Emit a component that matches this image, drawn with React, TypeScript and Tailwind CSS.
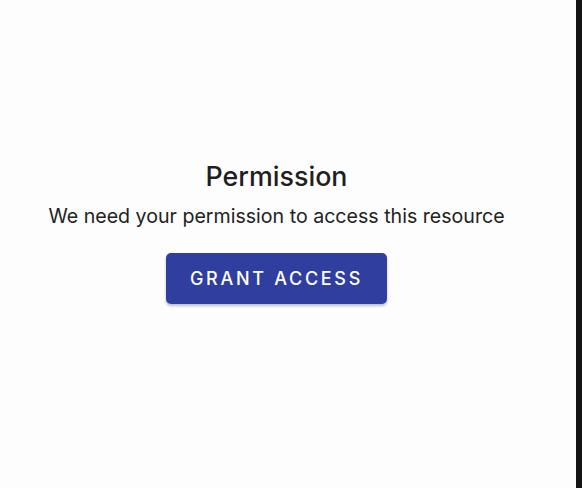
import React from "react";

const App = () => {
  return (
    <div className="flex h-[488px] w-[582px] bg-[#fdfdfd]">
      <main className="flex flex-1 flex-col items-center pr-[23px] pt-[160px] font-['Inter','Liberation_Sans',sans-serif] text-[#1f1f1f]">
        <h1 className="text-[26.8px] font-medium leading-[32px]">Permission</h1>
        <p className="mt-[11px] text-[19.6px] leading-[26px] text-[#222]">
          We need your permission to access this resource
        </p>
        <button className="mt-[24px] h-[51px] w-[221px] rounded-[5px] bg-[#303f9f] text-[18px] font-medium tracking-[2.7px] text-white shadow-[0_2px_3px_rgba(0,0,0,0.25)]">
          GRANT ACCESS
        </button>
      </main>
      <div className="w-[6px] bg-[#141414]" />
    </div>
  );
};

export default App;
